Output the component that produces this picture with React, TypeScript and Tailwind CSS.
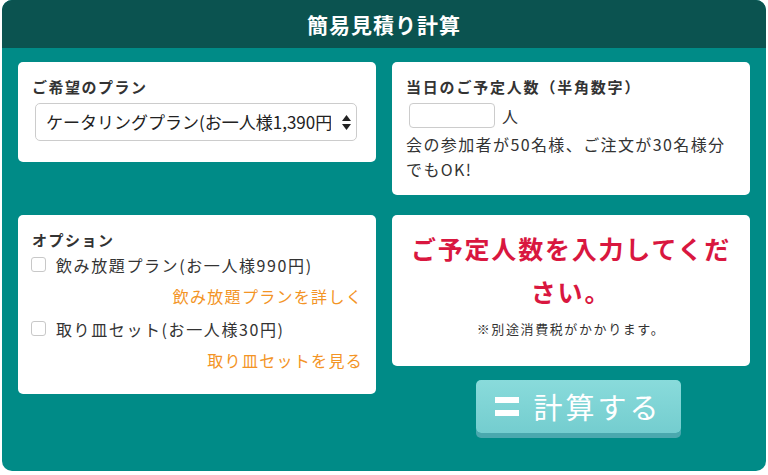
import { useState } from 'react';

const font = { fontFamily: '"Noto Sans CJK JP", "Noto Sans", sans-serif' };

export default function App() {
  const [plan, setPlan] = useState('catering');
  const [people, setPeople] = useState('');
  const [drink, setDrink] = useState(false);
  const [plates, setPlates] = useState(false);

  return (
    <div className="w-[768px] h-[475px] bg-white" style={font}>
      <div className="mx-[2px] h-[471px] w-[764px] rounded-[10px] bg-[#008b87] overflow-hidden">
        {/* Header */}
        <div className="h-[48px] bg-[#0b5350] flex items-center justify-center">
          <h1 className="text-[21px] leading-none font-bold text-white tracking-[1px]">
            簡易見積り計算
          </h1>
        </div>

        <div className="grid grid-cols-2 gap-x-4 gap-y-5 items-start px-4 pt-[14px]">
          {/* Plan */}
          <div className="bg-white rounded-[5px] pl-[14px] pt-[14px] pb-[21px]">
            <p className="text-[15px] leading-[22px] font-bold text-[#333] tracking-[1.5px]">ご希望のプラン</p>
            <div className="relative mt-[5px] ml-[3px] w-[322px]">
              <select
                value={plan}
                onChange={(e) => setPlan(e.target.value)}
                className="appearance-none w-full h-[38px] rounded-[5px] border border-[#ccc] bg-white pl-[10px] pr-[25px] text-[17px] text-[#222] outline-none"
                style={font}
              >
                <option value="catering">ケータリングプラン(お一人様1,390円)</option>
                <option value="party">パーティープラン(お一人様2,490円)</option>
              </select>
              <svg className="absolute right-[6px] top-[12px] pointer-events-none" width="9" height="15" viewBox="0 0 9 15">
                <path d="M4.5 0 L9 6 L0 6 Z" fill="#222" />
                <path d="M0 9 L9 9 L4.5 15 Z" fill="#222" />
              </svg>
            </div>
          </div>

          {/* Number of people */}
          <div className="bg-white rounded-[5px] pl-[14px] pr-[10px] pt-[14px] pb-[13px]">
            <p className="text-[15px] leading-[22px] font-bold text-[#333] tracking-[1.8px] whitespace-nowrap">
              当日のご予定人数（半角数字）
            </p>
            <div className="flex items-center mt-[5px] ml-[3px]">
              <input
                type="text"
                value={people}
                onChange={(e) => setPeople(e.target.value)}
                className="w-[86px] h-[25px] rounded-[4px] border border-[#ccc] px-2 text-[15px] outline-none"
              />
              <span className="ml-[7px] text-[16px] text-[#333]">人</span>
            </div>
            <p className="mt-[4px] text-[16px] leading-[25px] text-[#333] tracking-[1.4px] whitespace-nowrap">
              会の参加者が50名様、ご注文が30名様分
              <br />
              でもOK!
            </p>
          </div>

          {/* Options */}
          <div className="bg-white rounded-[5px] pl-[14px] pr-[13px] pt-[14px] pb-[21px] text-[#333]">
            <p className="text-[15px] leading-[22px] font-bold tracking-[1.5px]">オプション</p>
            <label className="mt-[1px] flex items-center h-[25px] cursor-pointer">
              <input
                type="checkbox"
                checked={drink}
                onChange={(e) => setDrink(e.target.checked)}
                className="appearance-none w-[15px] h-[15px] rounded-[3px] border border-[#c8c8c8] bg-white -ml-[1px]"
              />
              <span className="ml-[10px] text-[16px] tracking-[1.6px] whitespace-nowrap">飲み放題プラン(お一人様990円)</span>
            </label>
            <p className="mt-[7px] h-[25px] leading-[25px] text-right text-[16px] tracking-[1.3px] text-[#f39425]">
              <a href="#">飲み放題プランを詳しく</a>
            </p>
            <label className="mt-[7px] flex items-center h-[25px] cursor-pointer">
              <input
                type="checkbox"
                checked={plates}
                onChange={(e) => setPlates(e.target.checked)}
                className="appearance-none w-[15px] h-[15px] rounded-[3px] border border-[#c8c8c8] bg-white -ml-[1px]"
              />
              <span className="ml-[10px] text-[16px] tracking-[1.6px] whitespace-nowrap">取り皿セット(お一人様30円)</span>
            </label>
            <p className="mt-[7px] h-[25px] leading-[25px] text-right text-[16px] tracking-[1.3px] text-[#f39425]">
              <a href="#">取り皿セットを見る</a>
            </p>
          </div>

          {/* Result + calculate */}
          <div>
            <div className="bg-white rounded-[5px] px-[6px] pt-[12px] pb-[27px] text-center">
              <p className="text-[25px] leading-[43px] font-bold text-[#d9173f] tracking-[1.8px] whitespace-nowrap">
                ご予定人数を入力してくだ
                <br />
                さい。
              </p>
              <p className="mt-[6px] text-[13px] leading-[20px] text-[#333] tracking-[1.6px]">※別途消費税がかかります。</p>
            </div>
            <button
              type="button"
              className="mt-[14px] ml-[84px] w-[205px] h-[53px] rounded-[5px] bg-gradient-to-b from-[#89dbdb] to-[#74cdcf] shadow-[0_5px_0_#4aa8ae] flex items-center justify-center"
            >
              <span className="flex flex-col gap-[7px] mr-[14px]">
                <span className="block w-[24px] h-[6px] bg-white" />
                <span className="block w-[24px] h-[6px] bg-white" />
              </span>
              <span className="text-[29px] leading-none text-white tracking-[3px]" style={font}>計算する</span>
            </button>
          </div>
        </div>
      </div>
    </div>
  );
}
